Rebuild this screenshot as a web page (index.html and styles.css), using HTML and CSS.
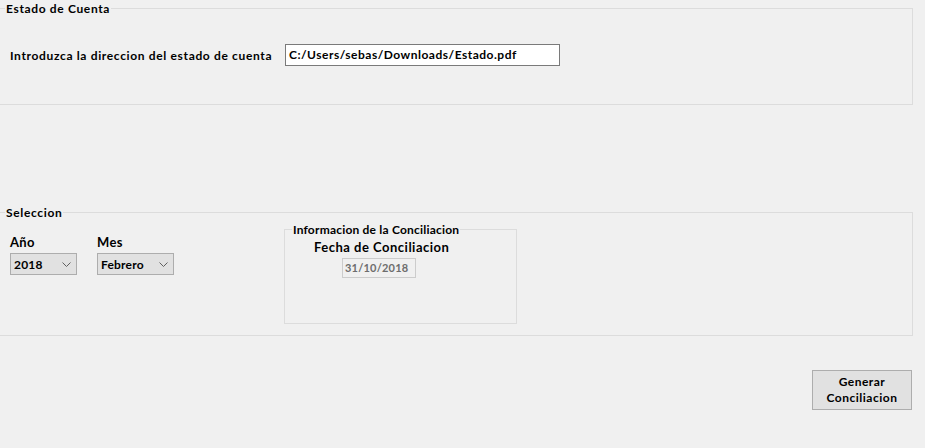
FILE: index.html
```html
<!DOCTYPE html>
<html lang="es">
<head>
<meta charset="utf-8">
<title>Estado de Cuenta</title>
<link rel="stylesheet" href="styles.css">
</head>
<body>
<div class="group group-estado">
  <span class="group-title">Estado de Cuenta</span>
  <div class="path-row">
    <label class="path-label">Introduzca la direccion del estado de cuenta</label>
    <div class="textbox">C:/Users/sebas/Downloads/Estado.pdf</div>
  </div>
</div>

<div class="group group-sel">
  <span class="group-title">Seleccion</span>
  <div class="sel-row">
    <div class="field field-year">
      <div class="field-label">Año</div>
      <div class="combo combo-year"><span>2018</span><svg class="chev" width="9" height="5" viewBox="0 0 9 5"><path d="M0.5 0.5 L4.5 4.5 L8.5 0.5" fill="none" stroke="#606060" stroke-width="1"/></svg></div>
    </div>
    <div class="field field-mes">
      <div class="field-label">Mes</div>
      <div class="combo combo-mes"><span>Febrero</span><svg class="chev" width="9" height="5" viewBox="0 0 9 5"><path d="M0.5 0.5 L4.5 4.5 L8.5 0.5" fill="none" stroke="#606060" stroke-width="1"/></svg></div>
    </div>
    <div class="group group-info">
      <span class="group-title info-title">Informacion de la Conciliacion</span>
      <div class="fecha-label">Fecha de Conciliacion</div>
      <div class="datebox">31/10/2018</div>
    </div>
  </div>
</div>

<div class="actions">
  <button class="btn">Generar<br>Conciliacion</button>
</div>
</body>
</html>
```
FILE: styles.css
```css
html, body {
  margin: 0;
  padding: 0;
  background: #f0f0f0;
}
body {
  font-family: Lato, "DejaVu Sans", sans-serif;
  font-weight: bold;
  font-size: 12px;
  letter-spacing: 0.65px;
  color: #000;
  width: 925px;
  height: 448px;
  overflow: hidden;
}
.group {
  border: 1px solid #dcdcdc;
  box-sizing: border-box;
}
.group-title {
  display: block;
  width: fit-content;
  background: #f0f0f0;
  padding: 0 1px;
  line-height: 16px;
  height: 16px;
  margin: -8px 0 0 6px;
}
.group-estado {
  margin: 8px 0 0 -2px;
  width: 915px;
  height: 97px;
}
.path-row {
  display: flex;
  align-items: center;
  margin: 27px 0 0 11px;
}
.path-label {
  width: 275px;
}
.textbox {
  box-sizing: border-box;
  width: 275px;
  height: 22px;
  border: 1px solid #7a7a7a;
  background: #fff;
  padding: 0 3px;
  line-height: 20px;
  letter-spacing: 0.5px;
}
.group-sel {
  margin: 107px 0 0 -2px;
  width: 915px;
  height: 124px;
}
.sel-row {
  display: flex;
  align-items: flex-start;
  margin: 8px 0 0 11px;
}
.field {
  margin-top: 5px;
}
.field-label {
  line-height: 16px;
  height: 16px;
  margin-bottom: 3px;
  font-size: 13px;
  letter-spacing: 0.3px;
}
.field-year {
  width: 87px;
}
.field-mes {
  width: 187px;
}
.combo {
  box-sizing: border-box;
  height: 22px;
  border: 1px solid #adadad;
  background: #e1e1e1;
  display: flex;
  align-items: center;
  justify-content: space-between;
  padding: 0 5px 0 3px;
  letter-spacing: 0.2px;
}
.combo-year { width: 67px; }
.combo-mes { width: 77px; }
.chev { display: block; }
.group-info {
  width: 233px;
  height: 95px;
  margin-top: 0;
}
.info-title {
  letter-spacing: 0.2px;
  margin-left: 7px;
}
.fecha-label {
  font-size: 13px;
  line-height: 16px;
  margin: 1px 0 0 29px;
  letter-spacing: 0.5px;
}
.datebox {
  box-sizing: border-box;
  width: 74px;
  height: 20px;
  margin: 3px 0 0 57px;
  border: 1px solid #cccccc;
  background: #f0f0f0;
  color: #6d6d6d;
  line-height: 18px;
  padding-left: 2px;
  font-size: 11px;
  letter-spacing: 0.2px;
}
.actions {
  display: flex;
  justify-content: flex-end;
  padding: 34px 13px 0 0;
}
.btn {
  box-sizing: border-box;
  width: 100px;
  height: 40px;
  border: 1px solid #adadad;
  background: #e1e1e1;
  font: inherit;
  font-size: 12px;
  line-height: 16px;
  letter-spacing: 0.5px;
  color: #000;
  padding: 0;
}
```
